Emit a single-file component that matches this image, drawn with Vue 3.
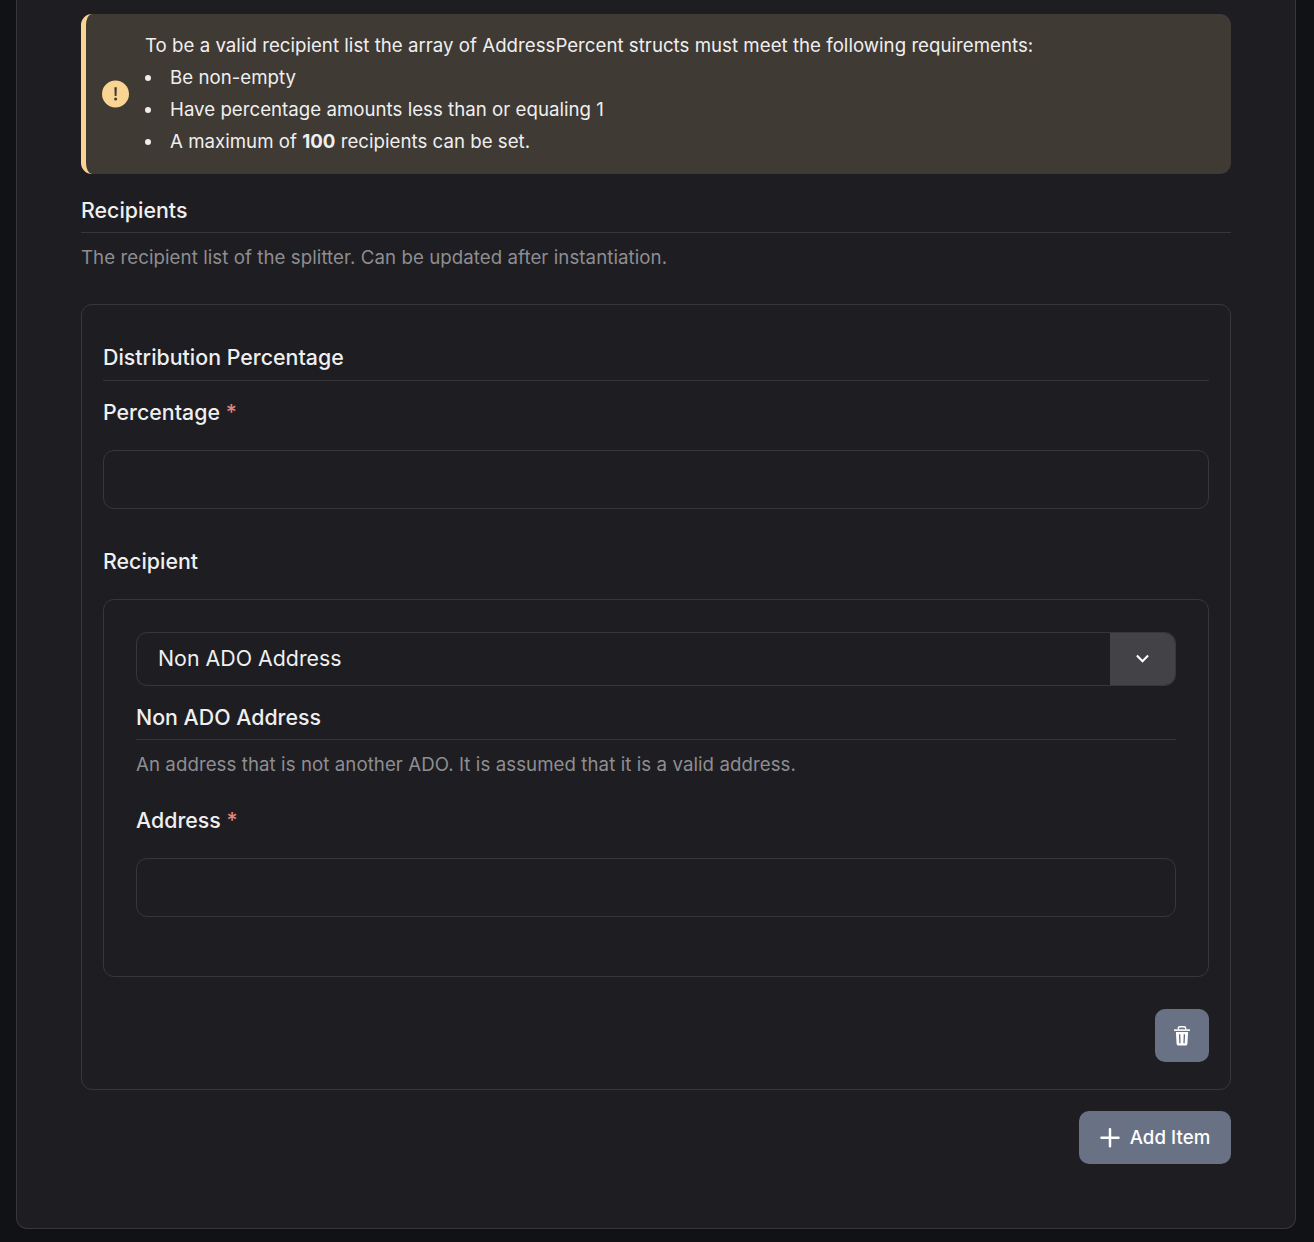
<script setup>
import { ref } from 'vue'

const requirements = [
  { before: 'Be non-empty' },
  { before: 'Have percentage amounts less than or equaling 1' },
  { before: 'A maximum of ', strong: '100', after: ' recipients can be set.' },
]
const percentage = ref('')
const address = ref('')
</script>

<template>
  <main class="page">
    <section class="panel">
      <div class="alert">
        <svg class="alert-icon" viewBox="0 0 27 28">
          <circle cx="13.5" cy="14" r="13.5" fill="#f9d493" />
          <path d="M12.4 7.2h2.4l-.3 8.8h-1.8z" fill="#3f3a34" />
          <circle cx="13.6" cy="19" r="1.5" fill="#3f3a34" />
        </svg>
        <div class="alert-body">
          <p>To be a valid recipient list the array of AddressPercent structs must meet the following requirements:</p>
          <ul>
            <li v-for="item in requirements" :key="item.before">
              <span>{{ item.before }}<strong v-if="item.strong">{{ item.strong }}</strong>{{ item.after }}</span>
            </li>
          </ul>
        </div>
      </div>

      <h2 class="heading recipients">Recipients</h2>
      <p class="hint">The recipient list of the splitter. Can be updated after instantiation.</p>

      <div class="item">
        <h2 class="heading">Distribution Percentage</h2>
        <label class="label" for="percentage">Percentage <em>*</em></label>
        <input id="percentage" v-model="percentage" class="input" />

        <h3 class="label recipient">Recipient</h3>
        <div class="group">
          <div class="select">
            <span>Non ADO Address</span>
            <button class="toggle" aria-label="Choose type">
              <svg width="14" height="10" viewBox="0 0 14 10">
                <path d="M.9 1.6 6.5 7.2l5.6-5.6" fill="none" stroke="#fff" stroke-width="2.1" />
              </svg>
            </button>
          </div>
          <h2 class="heading variant">Non ADO Address</h2>
          <p class="hint">An address that is not another ADO. It is assumed that it is a valid address.</p>
          <label class="label address" for="address">Address <em>*</em></label>
          <input id="address" v-model="address" class="input" />
        </div>

        <div class="actions">
          <button class="btn remove" aria-label="Remove item">
            <svg width="16" height="20" viewBox="0 0 16 20">
              <path d="M4.4 3.5V2.1Q4.4.7 5.8.7h4.4q1.4 0 1.4 1.4v1.4" fill="none" stroke="#fff" stroke-width="1.4" />
              <path d="M0 3.3h16v1.6H0z" fill="#fff" />
              <path fill-rule="evenodd" d="M1.9 6h12.2l-.7 12q-.1 1.4-1.4 1.4H4q-1.3 0-1.4-1.4zM4.9 8.3l.4 8.9h1.3l-.3-8.9zM9.7 8.3l-.3 8.9h1.3l.4-8.9z" fill="#fff" />
            </svg>
          </button>
        </div>
      </div>

      <div class="footer">
        <button class="btn add">
          <svg width="20" height="20" viewBox="0 0 20 20">
            <path d="M10 1.2v17M1.5 9.7h17" stroke="#fff" stroke-width="2.5" stroke-linecap="round" />
          </svg>
          <span>Add Item</span>
        </button>
      </div>
    </section>
  </main>
</template>

<style>
body {
  margin: 0;
  background: #101215;
}
</style>

<style scoped>
* {
  box-sizing: border-box;
}
.page {
  height: 1242px;
  padding: 0 18px 0 16px;
  overflow: hidden;
  background: #101215;
  color: #efeff0;
  font-family: Inter, sans-serif;
  font-size: 18.67px;
  letter-spacing: 0.02px;
}
.panel {
  height: 1229px;
  padding: 14px 64px 0;
  border: 1px solid #37373b;
  border-top: 0;
  border-radius: 0 0 11px 11px;
  background: #1e1d22;
}
p, ul, h2, h3 {
  margin: 0;
  padding: 0;
}
.alert {
  display: flex;
  align-items: center;
  gap: 16px;
  height: 160px;
  padding-left: 16px;
  border-left: 5px solid #f9d493;
  border-radius: 11px;
  background: #3f3a34;
}
.alert-icon {
  width: 27px;
  height: 28px;
  flex: none;
}
.alert-body {
  line-height: 32px;
}
li {
  display: flex;
  align-items: center;
  gap: 19px;
}
li::before {
  content: '';
  width: 6px;
  height: 6px;
  border-radius: 50%;
  background: #efeff0;
}
strong {
  font-weight: 700;
}
.heading {
  height: 38px;
  border-bottom: 1px solid #37373b;
  font-size: 21.33px;
  line-height: 30px;
  font-weight: 500;
}
.recipients {
  margin-top: 21px;
}
.hint {
  margin-top: 9px;
  line-height: 32px;
  letter-spacing: 0.07px;
  color: #8e8e91;
}
.item {
  height: 786px;
  margin-top: 30px;
  padding: 37px 21px 0;
  border: 1px solid #37373b;
  border-radius: 11px;
}
.item > .heading {
  height: 39px;
}
.label {
  display: block;
  height: 32px;
  margin-top: 16px;
  font-size: 21.33px;
  line-height: 30px;
  font-weight: 500;
}
em {
  color: #e5847f;
  font-style: normal;
}
.input {
  display: block;
  width: 100%;
  height: 59px;
  margin-top: 21px;
  padding: 0 21px;
  border: 1px solid #37373b;
  border-radius: 11px;
  outline: 0;
  background: transparent;
  color: inherit;
  font: inherit;
}
.recipient {
  margin-top: 37px;
}
.group {
  height: 378px;
  margin-top: 21px;
  padding: 32px 32px 0;
  border: 1px solid #37373b;
  border-radius: 11px;
}
.select {
  display: flex;
  justify-content: space-between;
  align-items: center;
  height: 54px;
  padding-left: 21px;
  overflow: hidden;
  border: 1px solid #37373b;
  border-radius: 11px;
  font-size: 21.33px;
  line-height: 30px;
}
.select > span {
  padding-bottom: 2px;
}
.toggle {
  display: flex;
  align-items: center;
  justify-content: center;
  align-self: stretch;
  width: 65px;
  padding: 0;
  border: 0;
  background: #434247;
}
.variant {
  margin-top: 16px;
}
.address {
  margin-top: 24px;
}
.actions, .footer {
  display: flex;
  justify-content: flex-end;
}
.actions {
  margin-top: 32px;
}
.footer {
  margin-top: 21px;
}
.btn {
  display: flex;
  align-items: center;
  justify-content: center;
  height: 53px;
  padding: 0;
  border: 0;
  border-radius: 10px;
  background: #697184;
  color: #fff;
  font: 500 18.67px Inter, sans-serif;
  letter-spacing: 0.05px;
}
.remove {
  width: 54px;
}
.add {
  width: 152px;
  gap: 10px;
}
</style>
